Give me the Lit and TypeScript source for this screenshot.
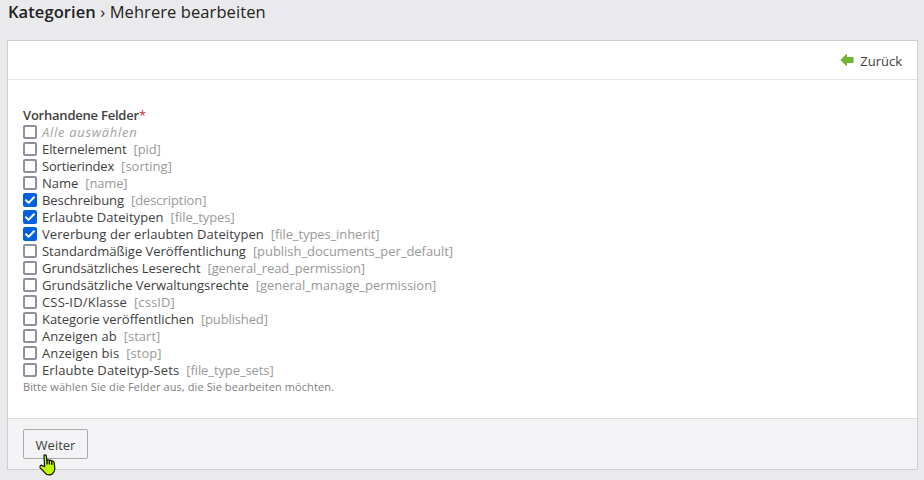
import { LitElement, html, css } from "lit";
import { customElement, property, state } from "lit/decorators.js";
import { classMap } from "lit/directives/class-map.js";
import { styleMap } from "lit/directives/style-map.js";

/** labelFit / keyFit: extra width in px, spread over the letters of the text. */
interface Field {
  label: string;
  key: string;
  labelFit: number;
  keyFit: number;
  checked?: boolean;
}

const FIELDS: Field[] = [
  { label: "Elternelement", key: "pid", labelFit: -1, keyFit: -0.7 },
  { label: "Sortierindex", key: "sorting", labelFit: -2, keyFit: 0 },
  { label: "Name", key: "name", labelFit: 0, keyFit: -1 },
  { label: "Beschreibung", key: "description", labelFit: -1, keyFit: -1 },
  { label: "Erlaubte Dateitypen", key: "file_types", labelFit: 1, keyFit: -1, checked: true },
  { label: "Vererbung der erlaubten Dateitypen", key: "file_types_inherit", labelFit: 2, keyFit: -2, checked: true },
  { label: "Standardmäßige Veröffentlichung", key: "publish_documents_per_default", labelFit: -0.5, keyFit: -1.5 },
  { label: "Grundsätzliches Leserecht", key: "general_read_permission", labelFit: -1, keyFit: -3 },
  { label: "Grundsätzliche Verwaltungsrechte", key: "general_manage_permission", labelFit: -1, keyFit: -1 },
  { label: "CSS-ID/Klasse", key: "cssID", labelFit: 2.4, keyFit: 0.5 },
  { label: "Kategorie veröffentlichen", key: "published", labelFit: -1, keyFit: -1.5 },
  { label: "Anzeigen ab", key: "start", labelFit: 1, keyFit: 0 },
  { label: "Anzeigen bis", key: "stop", labelFit: 1.3, keyFit: 0 },
  { label: "Erlaubte Dateityp-Sets", key: "file_type_sets", labelFit: 2.6, keyFit: -1.6 },
];
FIELDS[3].checked = true;

@customElement("check-row")
export class CheckRow extends LitElement {
  @property() label = "";
  @property() key = "";
  @property({ type: Number }) labelFit = 0;
  @property({ type: Number }) keyFit = 0;
  @property({ type: Boolean }) checked = false;
  @property({ type: Boolean }) all = false;

  static styles = css`
    :host {
      display: flex;
      align-items: center;
      height: 17px;
      line-height: 17px;
      white-space: nowrap;
    }
    .box {
      box-sizing: border-box;
      flex: none;
      width: 14px;
      height: 14px;
      margin: 0 5px 1px 0;
      border: 2px solid #8f8f9d;
      border-radius: 2px;
      background: #fff;
    }
    .box.on {
      border: 0;
      background: #0061e0;
    }
    .box svg {
      display: block;
    }
    .all {
      color: #a3a3a3;
      font-style: italic;
    }
    .key {
      margin-left: 7px;
      color: #999;
    }
  `;

  private tracking(text: string, fit: number) {
    return styleMap({ letterSpacing: `${(fit / text.length).toFixed(3)}px` });
  }

  render() {
    return html`
      <span class=${classMap({ box: true, on: this.checked })}>
        ${this.checked
          ? html`<svg width="14" height="14" viewBox="0 0 14 14">
              <path d="M3 7.3 5.6 9.9 11 4.2" fill="none" stroke="#fff" stroke-width="2" stroke-linecap="round" stroke-linejoin="round" />
            </svg>`
          : ""}
      </span>
      <span class=${classMap({ all: this.all })} style=${this.tracking(this.label, this.labelFit)}>${this.label}</span>
      ${this.key
        ? html`<span class="key" style=${this.tracking(`[${this.key}]`, this.keyFit)}>[${this.key}]</span>`
        : ""}
    `;
  }
}

@customElement("app-root")
export class AppRoot extends LitElement {
  @state() private fields = FIELDS;

  static styles = css`
    :host {
      display: block;
      box-sizing: border-box;
      height: 480px;
      padding: 0 6px 0 7px;
      overflow: hidden;
      background: #eaeaec;
      color: #404040;
      font: 13px "Open Sans", "Noto Sans", sans-serif;
    }
    h1 {
      height: 40px;
      margin: 0;
      padding-left: 1px;
      color: #222;
      font-size: 16.5px;
      font-weight: 400;
      line-height: 24px;
      letter-spacing: 0.08px;
      box-sizing: border-box;
    }
    h1 strong {
      font-weight: 600;
    }
    .card {
      display: flex;
      flex-direction: column;
      box-sizing: border-box;
      height: 430px;
      border: 1px solid #d0d0d3;
      background: #fff;
    }
    .bar {
      display: flex;
      align-items: center;
      justify-content: flex-end;
      gap: 6px;
      box-sizing: border-box;
      height: 39px;
      padding: 2px 15px 0 0;
      border-bottom: 1px solid #e6e6e8;
    }
    .bar svg {
      margin-bottom: 2px;
    }
    .form {
      flex: 1;
      padding: 27px 15px 0;
    }
    .legend {
      height: 17px;
      line-height: 17px;
      font-weight: 600;
      letter-spacing: -0.22px;
    }
    .legend span {
      color: #c33;
      font-weight: 400;
    }
    .tip {
      color: #808080;
      font-size: 11px;
      line-height: 15px;
      letter-spacing: 0.09px;
    }
    .foot {
      box-sizing: border-box;
      height: 51px;
      padding: 10px 15px;
      border-top: 1px solid #dddde0;
      background: #f3f3f5;
    }
    .wrap {
      position: relative;
      width: 65px;
    }
    button {
      display: block;
      width: 65px;
      height: 30px;
      padding: 2px 0 0;
      border: 1px solid #aaa;
      border-radius: 2px;
      background: #f3f3f5;
      color: #404040;
      font: inherit;
    }
    .hand {
      position: absolute;
      left: 16px;
      top: 25px;
    }
  `;

  render() {
    return html`
      <h1><strong>Kategorien</strong> › <span>Mehrere bearbeiten</span></h1>
      <section class="card">
        <div class="bar">
          <svg width="14" height="12" viewBox="0 0 14 12">
            <path d="M0.3 6 6 0.3h1V3h6.6v6H7v2.7H6z" fill="#72b433" />
          </svg>
          <span>Zurück</span>
        </div>
        <div class="form">
          <div class="legend">Vorhandene Felder<span>*</span></div>
          <check-row label="Alle auswählen" .labelFit=${9.8} all></check-row>
          ${this.fields.map(
            (f) => html`<check-row
              .label=${f.label}
              .key=${f.key}
              .labelFit=${f.labelFit}
              .keyFit=${f.keyFit}
              .checked=${!!f.checked}
            ></check-row>`
          )}
          <div class="tip">Bitte wählen Sie die Felder aus, die Sie bearbeiten möchten.</div>
        </div>
        <div class="foot">
          <div class="wrap">
            <button>Weiter</button>
            <svg class="hand" width="17" height="22" viewBox="0 0 17 22">
              <path
                d="M5 1.2Q6.3.3 7.2 1.5L8 6.3Q9.2 5.2 10.2 6.4 11.6 5.6 12.5 7 14.2 6.6 15 8.2L15.8 14Q15.8 18.7 12 20.7 8 21.6 6 18.8L1.2 13.8Q.5 11.6 2.4 11.2L5.6 12.6Z"
                fill="#bfff00" stroke="#101010" stroke-width="1.2" stroke-linejoin="round" />
              <path d="M8 6v4.4M10.4 6.5v4M12.8 7v4" fill="none" stroke="#101010" stroke-width="1.4" />
            </svg>
          </div>
        </div>
      </section>
    `;
  }
}
